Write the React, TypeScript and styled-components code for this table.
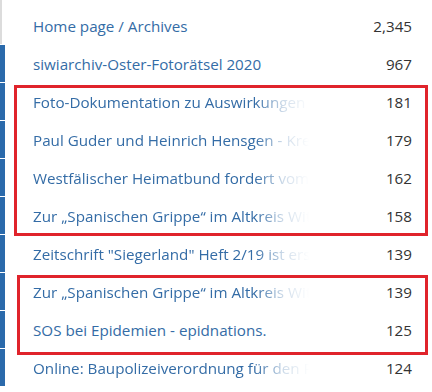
import React from "react";
import styled, { createGlobalStyle } from "styled-components";

const Global = createGlobalStyle`
  html, body { margin: 0; padding: 0; background: #fff; }
  body { font-family: "Open Sans", "Noto Sans", sans-serif; }
`;

const Wrap = styled.div`
  position: relative;
  width: 432px;
  height: 392px;
  overflow: hidden;
  background: #fff;
`;

const List = styled.ul`
  list-style: none;
  margin: 0;
  padding: 0;
  display: flex;
  flex-direction: column;
  gap: 1px;
`;

const Row = styled.li<{ $first?: boolean }>`
  display: flex;
  align-items: center;
  height: ${(p) => (p.$first ? 44 : 37)}px;
  padding-top: ${(p) => (p.$first ? 8 : 0)}px;
  box-sizing: border-box;
  border-left: ${(p) => (p.$first ? "2px solid #dcdcdc" : "5px solid #2b6aab")};
  padding-left: ${(p) => (p.$first ? 31 : 28)}px;
  padding-right: 20px;
`;

const Title = styled.a<{ $fade: boolean }>`
  flex: 0 0 276px;
  white-space: nowrap;
  overflow: hidden;
  font-size: 15.2px;
  color: #346ca6;
  text-decoration: none;
  ${(p) =>
    p.$fade
      ? `-webkit-mask-image: linear-gradient(to right, #000 0, #000 222px, rgba(0,0,0,0.25) 250px, transparent 276px);
         mask-image: linear-gradient(to right, #000 0, #000 222px, rgba(0,0,0,0.25) 250px, transparent 276px);`
      : ""}
`;

const Count = styled.span`
  margin-left: auto;
  font-size: 15.2px;
  color: #333;
`;

const Mark = styled.div<{ $top: number; $left: number; $w: number; $h: number }>`
  position: absolute;
  top: ${(p) => p.$top}px;
  left: ${(p) => p.$left}px;
  width: ${(p) => p.$w}px;
  height: ${(p) => p.$h}px;
  border: 3.5px solid #e0232b;
  box-sizing: border-box;
  pointer-events: none;
`;

const rows: { t: string; n: string; fade: boolean }[] = [
  { t: "Home page / Archives", n: "2,345", fade: false },
  { t: "siwiarchiv-Oster-Fotorätsel 2020", n: "967", fade: false },
  { t: "Foto-Dokumentation zu Auswirkungen der Corona", n: "181", fade: true },
  { t: "Paul Guder und Heinrich Hensgen - Kreisheimat", n: "179", fade: true },
  { t: "Westfälischer Heimatbund fordert vom Land", n: "162", fade: true },
  { t: "Zur „Spanischen Grippe“ im Altkreis Wittgenstein", n: "158", fade: true },
  { t: "Zeitschrift \"Siegerland\" Heft 2/19 ist erschienen", n: "139", fade: true },
  { t: "Zur „Spanischen Grippe“ im Altkreis Wittgenstein", n: "139", fade: true },
  { t: "SOS bei Epidemien - epidnations.", n: "125", fade: false },
  { t: "Online: Baupolizeiverordnung für den Regierungsbezirk", n: "124", fade: true },
];

export default function App() {
  return (
    <Wrap>
      <Global />
      <List>
        {rows.map((r, i) => (
          <Row key={i} $first={i === 0}>
            <Title href="#" $fade={r.fade}>{r.t}</Title>
            <Count>{r.n}</Count>
          </Row>
        ))}
      </List>
      <Mark $top={85} $left={14} $w={414} $h={151} />
      <Mark $top={275} $left={17} $w={411} $h={80} />
    </Wrap>
  );
}
